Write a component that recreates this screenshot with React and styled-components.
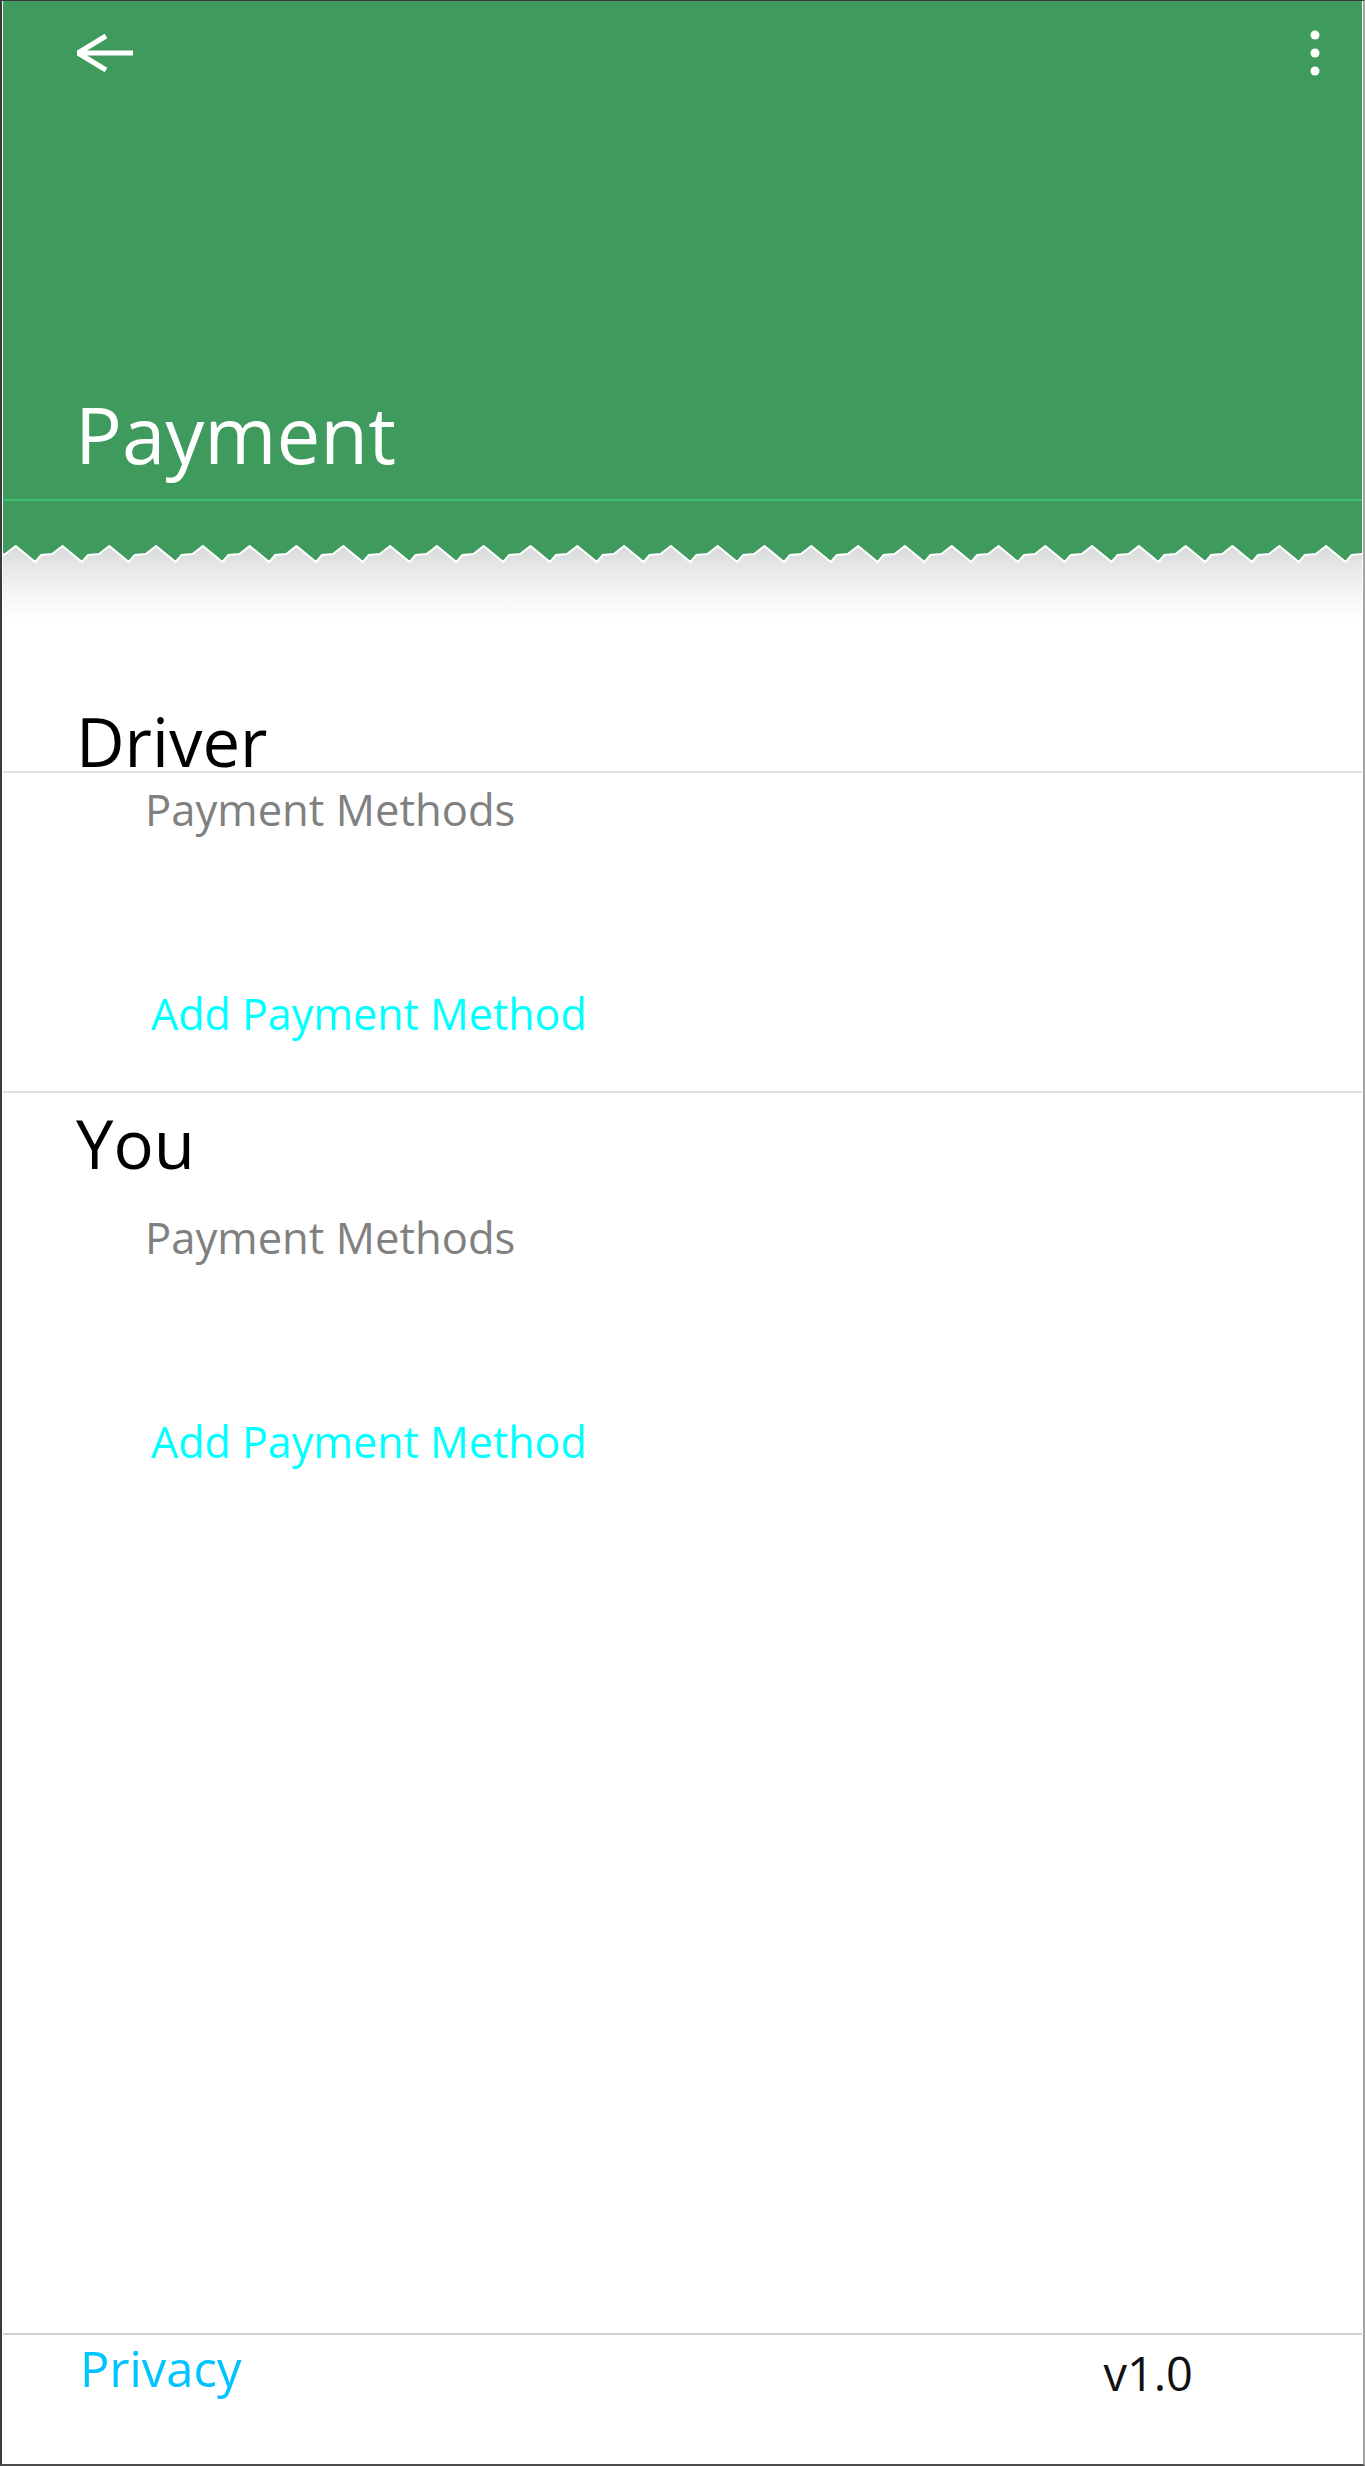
import styled, { createGlobalStyle } from "styled-components";

const GlobalStyle = createGlobalStyle`
  html, body {
    margin: 0;
    padding: 0;
    background: #fff;
  }
  body {
    font-family: "Open Sans", "Noto Sans", sans-serif;
  }
`;

const GREEN = "#3e9a5d";

const Screen = styled.div`
  box-sizing: border-box;
  width: 1365px;
  height: 2466px;
  display: flex;
  flex-direction: column;
  padding: 0 1px;
  background: #fff;
  border-top: 1px solid #3a3a3a;
  border-left: 2px solid #3a3a3a;
  border-bottom: 2px solid #4d4d4d;
  border-right: 2px solid #a3a3a3;
  overflow: hidden;
`;

const Header = styled.header`
  flex-shrink: 0;
  height: 544px;
  display: flex;
  flex-direction: column;
  background: ${GREEN};
`;

const TopBar = styled.div`
  height: 104px;
  display: flex;
  align-items: center;
  justify-content: space-between;
  padding: 0 42px 0 71px;
`;

const IconButton = styled.button`
  border: 0;
  padding: 0;
  background: none;
  display: flex;
  cursor: pointer;
`;

const Title = styled.h1`
  margin: 289px 0 0;
  padding-left: 72px;
  font-size: 78px;
  line-height: 80px;
  font-weight: 400;
  color: #fff;
`;

const GreenRule = styled.div`
  margin-top: 25px;
  height: 2px;
  background: #3dbd6e;
`;

const TornEdge = styled.div`
  flex-shrink: 0;
  height: 75px;
  background: linear-gradient(
    to bottom,
    #d7d8d8 0px,
    #e6e7e7 22px,
    #f5f5f5 48px,
    #ffffff 75px
  );

  svg {
    display: block;
    width: 100%;
    height: 22px;
  }
`;

const Body = styled.main`
  flex: 1;
  display: flex;
  flex-direction: column;
`;

const Section = styled.section`
  display: flex;
  flex-direction: column;
  padding-bottom: 55px;
  border-bottom: ${(p) => (p.$divided ? "2px solid #e0e0e0" : "0")};
`;

const Heading = styled.h2`
  margin: ${(p) => p.$offset}px 0 0;
  padding-left: 73px;
  font-size: 67px;
  line-height: 59px;
  font-weight: 400;
  color: #000;
`;

const MethodList = styled.div`
  display: flex;
  flex-direction: column;
  align-items: flex-start;
  border-top: ${(p) => (p.$ruled ? "2px solid #e2e2e2" : "0")};
  padding-top: ${(p) => (p.$ruled ? 14 : 42)}px;
`;

const ListLabel = styled.div`
  margin-left: 142px;
  font-size: 43.6px;
  line-height: 44px;
  color: #808080;
`;

const AddLink = styled.span`
  margin: 161px 0 0 148px;
  font-size: 43px;
  line-height: 44px;
  color: #00ffff;
  cursor: pointer;
`;

const Footer = styled.footer`
  flex-shrink: 0;
  box-sizing: border-box;
  height: 131px;
  display: flex;
  align-items: flex-start;
  justify-content: space-between;
  padding: 0 169px 0 77px;
  border-top: 2px solid #d0d0d0;
`;

const PrivacyLink = styled.span`
  margin-top: 10px;
  font-size: 49px;
  line-height: 46px;
  color: #00c4ff;
  cursor: pointer;
`;

const Version = styled.span`
  margin-top: 15px;
  font-size: 47px;
  line-height: 47px;
  color: #111;
`;

const BackArrow = () => (
  <svg width="60" height="40" viewBox="0 0 60 40">
    <path
      d="M3 20 H59 M4 20 L32 3 M4 20 L32 37"
      stroke="#fff"
      strokeWidth="5"
      fill="none"
    />
  </svg>
);

const Kebab = () => (
  <svg width="10" height="46" viewBox="0 0 10 46">
    <circle cx="5" cy="5" r="4.5" fill="#fff" />
    <circle cx="5" cy="23" r="4.5" fill="#fff" />
    <circle cx="5" cy="41" r="4.5" fill="#fff" />
  </svg>
);

const PERIOD = 46.8;

const zigzagPoints = (width) => {
  const pts = [];
  for (let x = 12.7 - PERIOD; x < width + PERIOD; x += PERIOD) {
    pts.push([x, 1], [x + 19.5, 17], [x + 25.5, 10], [x + 36.5, 9]);
  }
  return pts;
};

const Zigzag = () => {
  const pts = zigzagPoints(1400);
  const line = pts.map(([x, y]) => `${x.toFixed(1)},${y}`).join(" L");
  const first = pts[0][0].toFixed(1);
  const last = pts[pts.length - 1][0].toFixed(1);
  return (
    <svg>
      <path d={`M${first},0 L${line} L${last},0 Z`} fill={GREEN} />
      <path d={`M${line}`} stroke="#fff" strokeWidth="2" fill="none" />
    </svg>
  );
};

const sections = [
  { name: "Driver", offset: 92, ruled: true, divided: true },
  { name: "You", offset: 21, ruled: false, divided: false },
];

const App = () => {
  return (
    <>
      <GlobalStyle />
      <Screen>
        <Header>
          <TopBar>
            <IconButton aria-label="Back">
              <BackArrow />
            </IconButton>
            <IconButton aria-label="More">
              <Kebab />
            </IconButton>
          </TopBar>
          <Title>Payment</Title>
          <GreenRule />
        </Header>
        <TornEdge>
          <Zigzag />
        </TornEdge>
        <Body>
          {sections.map((s) => (
            <Section key={s.name} $divided={s.divided}>
              <Heading $offset={s.offset}>{s.name}</Heading>
              <MethodList $ruled={s.ruled}>
                <ListLabel>Payment Methods</ListLabel>
                <AddLink>Add Payment Method</AddLink>
              </MethodList>
            </Section>
          ))}
        </Body>
        <Footer>
          <PrivacyLink>Privacy</PrivacyLink>
          <Version>v1.0</Version>
        </Footer>
      </Screen>
    </>
  );
};

export default App;
